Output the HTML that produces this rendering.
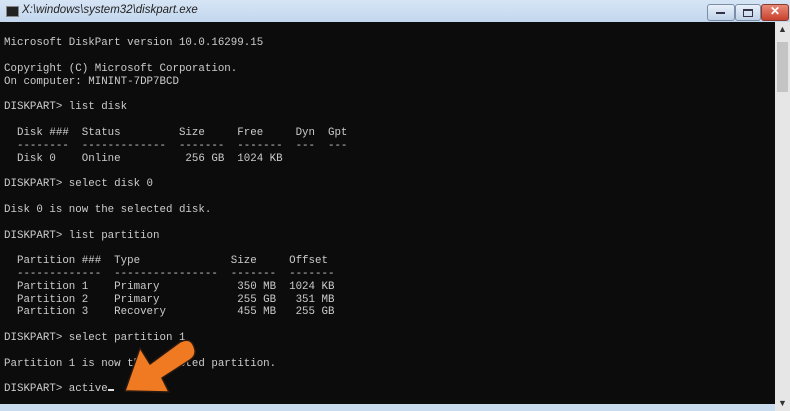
<!DOCTYPE html>
<html><head><style>
body{margin:0;width:790px;height:411px;overflow:hidden;background:#c9dcef;font-family:"Liberation Sans",sans-serif}
#title{position:absolute;left:0;top:0;width:790px;height:22px;background:linear-gradient(#d6e5f5,#c3d7ee)}
#title span{position:absolute;left:22px;top:4px;font-size:11.5px;font-style:italic;color:#222}
#ico{position:absolute;left:6px;top:6px;width:11px;height:9px;background:#222;border:1px solid #888}
.btn{position:absolute;top:4px;height:15px;border:1px solid #7a8ea8;border-radius:3px;background:linear-gradient(#e8f0fa,#c0d2e8)}
#con{position:absolute;left:0;top:22px;width:775px;height:382px;background:#0c0c0c}
pre{position:absolute;left:4px;top:15.4px;margin:0;font-family:"Liberation Mono",monospace;font-size:10.8px;line-height:12.82px;color:#cccccc}
#sb{position:absolute;left:775px;top:22px;width:15px;height:389px;background:#e6e6e6}
</style></head><body>
<div id="title"><div id="ico"></div><span>X:\windows\system32\diskpart.exe</span></div>
<div class="btn" style="left:707px;width:26px"><div style="position:absolute;left:8px;top:7px;width:9px;height:2px;background:#334"></div></div>
<div class="btn" style="left:735px;width:24px"><div style="position:absolute;left:7px;top:4px;width:8px;height:5px;border:1px solid #334;border-top-width:2px"></div></div>
<div class="btn" style="left:761px;width:26px;background:linear-gradient(#e88a78,#c8412c);border-color:#8a3a2c"><span style="position:absolute;left:8px;top:-1px;color:#fff;font-weight:bold;font-size:12px">✕</span></div>
<div id="con"><pre>Microsoft DiskPart version 10.0.16299.15

Copyright (C) Microsoft Corporation.
On computer: MININT-7DP7BCD

DISKPART&gt; list disk

  Disk ###  Status         Size     Free     Dyn  Gpt
  --------  -------------  -------  -------  ---  ---
  Disk 0    Online          256 GB  1024 KB

DISKPART&gt; select disk 0

Disk 0 is now the selected disk.

DISKPART&gt; list partition

  Partition ###  Type              Size     Offset
  -------------  ----------------  -------  -------
  Partition 1    Primary            350 MB  1024 KB
  Partition 2    Primary            255 GB   351 MB
  Partition 3    Recovery           455 MB   255 GB

DISKPART&gt; select partition 1

Partition 1 is now the selected partition.

DISKPART&gt; active<span style="display:inline-block;width:6px;height:2px;background:#ddd"></span></pre></div>
<div id="sb"><div style="position:absolute;left:2px;top:20px;width:11px;height:50px;background:#c4c4c4"></div><span style="position:absolute;left:3px;top:2px;font-size:9px;color:#333">▲</span><span style="position:absolute;left:3px;top:376px;font-size:9px;color:#333">▼</span></div>
<svg style="position:absolute;left:0;top:0" width="790" height="411">
<path d="M125,391 L140,348 L150,364 L180,342 Q192,336 195,350 Q196,356 190,360 L162,378 L169,392 Z" fill="#f07a22" stroke="#2a1a10" stroke-width="1.5" stroke-linejoin="round"/>
</svg>
</body></html>
